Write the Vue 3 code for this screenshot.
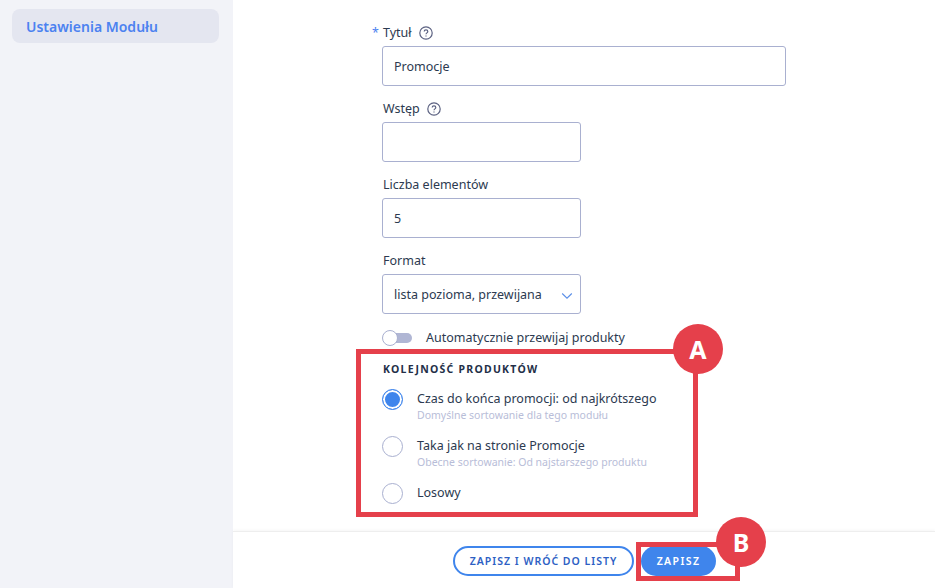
<script setup>
const options = [
  { label: 'Czas do końca promocji: od najkrótszego', hint: 'Domyślne sortowanie dla tego modułu', checked: true },
  { label: 'Taka jak na stronie Promocje', hint: 'Obecne sortowanie: Od najstarszego produktu', checked: false },
  { label: 'Losowy', hint: '', checked: false }
]
</script>

<template>
  <div class="page">
    <aside class="sidebar">
      <div class="nav-item">Ustawienia Modułu</div>
    </aside>
    <main class="main">
      <div class="form">
        <div class="field first">
          <div class="label"><span class="star">*</span>Tytuł
            <svg class="help" viewBox="0 0 14 14"><circle cx="7" cy="7" r="6.2" /><path d="M5.2 5.6c0-1 .8-1.7 1.8-1.7s1.8.7 1.8 1.6c0 1.3-1.8 1.4-1.8 2.7" /><path d="M7 9.6v.9" /></svg>
          </div>
          <div class="input wide">Promocje</div>
        </div>
        <div class="field">
          <div class="label">Wstęp
            <svg class="help" viewBox="0 0 14 14"><circle cx="7" cy="7" r="6.2" /><path d="M5.2 5.6c0-1 .8-1.7 1.8-1.7s1.8.7 1.8 1.6c0 1.3-1.8 1.4-1.8 2.7" /><path d="M7 9.6v.9" /></svg>
          </div>
          <div class="input"></div>
        </div>
        <div class="field">
          <div class="label">Liczba elementów</div>
          <div class="input">5</div>
        </div>
        <div class="field">
          <div class="label">Format</div>
          <div class="input select">lista pozioma, przewijana
            <svg class="chev" viewBox="0 0 12 8"><path d="M1.2 1.5 6 6.2l4.8-4.7" /></svg>
          </div>
        </div>
        <div class="toggle-row">
          <span class="toggle"><span class="knob"></span></span>
          <span>Automatycznie przewijaj produkty</span>
        </div>
        <div class="section-title">KOLEJNOŚĆ PRODUKTÓW</div>
        <div v-for="o in options" :key="o.label" class="radio-row">
          <span class="radio" :class="{ on: o.checked }"></span>
          <div>
            <div class="radio-label">{{ o.label }}</div>
            <div v-if="o.hint" class="radio-hint">{{ o.hint }}</div>
          </div>
        </div>
      </div>
      <footer class="footer">
        <button class="btn outline">ZAPISZ I WRÓĆ DO LISTY</button>
        <button class="btn solid">ZAPISZ</button>
      </footer>
    </main>
    <div class="box box-a"></div>
    <div class="badge badge-a">A</div>
    <div class="box box-b"></div>
    <div class="badge badge-b">B</div>
  </div>
</template>

<style scoped>
.page {
  position: relative;
  display: flex;
  width: 935px;
  height: 588px;
  overflow: hidden;
  background: #fff;
  font-family: "Noto Sans", sans-serif;
  font-size: 12.5px;
  color: #2c3a50;
}
.sidebar {
  width: 233px;
  flex: none;
  padding: 9px 14px 0 12px;
  box-sizing: border-box;
  background: #f2f3f8;
}
.nav-item {
  height: 34px;
  line-height: 36px;
  padding-left: 14px;
  border-radius: 8px;
  background: #e4e6f0;
  color: #4c82f0;
  font-weight: 600;
  font-size: 14px;
}
.main {
  flex: 1;
  display: flex;
  flex-direction: column;
  justify-content: space-between;
}
.form {
  padding-left: 149px;
}
.field {
  margin-top: 14px;
}
.field.first {
  margin-top: 24px;
}
.label {
  position: relative;
  display: flex;
  align-items: center;
  gap: 7px;
  height: 18px;
  margin-bottom: 4px;
  padding-left: 1px;
  line-height: 18px;
}
.star {
  position: absolute;
  left: -10px;
  color: #4c82f0;
}
.help {
  width: 14px;
  height: 14px;
  fill: none;
  stroke: #5c6282;
  stroke-width: 1.2;
}
.input {
  position: relative;
  box-sizing: border-box;
  width: 199px;
  height: 40px;
  line-height: 39px;
  padding-left: 11px;
  border: 1px solid #a9b0d0;
  border-radius: 3px;
  background: #fff;
}
.input.wide {
  width: 404px;
}
.chev {
  position: absolute;
  right: 7px;
  top: 17px;
  width: 12px;
  height: 8px;
  fill: none;
  stroke: #5b8fe8;
  stroke-width: 1.1;
}
.toggle-row {
  display: flex;
  align-items: center;
  gap: 14px;
  margin-top: 15px;
  height: 18px;
  line-height: 18px;
}
.toggle {
  position: relative;
  display: block;
  width: 30px;
  height: 16px;
}
.toggle::before {
  content: "";
  position: absolute;
  left: 8px;
  right: 0;
  top: 3px;
  height: 10px;
  border-radius: 5px;
  background: #b0b6d4;
}
.knob {
  position: absolute;
  left: 0;
  top: 0;
  box-sizing: border-box;
  width: 16px;
  height: 16px;
  border: 1px solid #a9b0d0;
  border-radius: 50%;
  background: #fff;
}
.section-title {
  margin-top: 14px;
  padding-left: 1px;
  font-size: 10.5px;
  line-height: 16px;
  font-weight: 700;
  letter-spacing: 1.25px;
  color: #232f48;
}
.radio-row {
  display: flex;
  gap: 14px;
  margin-top: 10px;
  min-height: 37px;
}
.section-title + .radio-row {
  margin-top: 11px;
}
.radio {
  flex: none;
  box-sizing: border-box;
  width: 21px;
  height: 21px;
  margin-top: 1px;
  border: 1px solid #a9b0d0;
  border-radius: 50%;
  background: #fff;
}
.radio.on {
  border-color: #3f85ec;
  background: #3f85ec;
  box-shadow: inset 0 0 0 2px #fff;
}
.radio-label {
  line-height: 18px;
  margin-top: 2px;
}
.radio-hint {
  margin-top: 1px;
  font-size: 10.5px;
  line-height: 13px;
  color: #b8bdd8;
}
.footer {
  display: flex;
  justify-content: center;
  gap: 7px;
  height: 57px;
  box-sizing: border-box;
  padding: 14px 0 0 1px;
  background: #fff;
  border-top: 1px solid #eee;
  box-shadow: 0 -1px 3px rgba(0, 0, 0, 0.04);
}
.btn {
  height: 30px;
  box-sizing: border-box;
  border-radius: 15px;
  font-family: "Noto Sans", sans-serif;
  font-size: 10.5px;
  font-weight: 600;
  letter-spacing: 1.4px;
}
.outline {
  width: 181px;
  border: 2px solid #3f85ec;
  background: #fff;
  color: #2e5fc4;
  letter-spacing: 1px;
}
.solid {
  width: 75px;
  border: none;
  background: #3f85ec;
  color: #fff;
}
.box {
  position: absolute;
  box-sizing: border-box;
  border: 5px solid #e5404b;
}
.box-a {
  left: 356px;
  top: 349px;
  width: 342px;
  height: 168px;
}
.box-b {
  left: 636px;
  top: 542px;
  width: 104px;
  height: 39px;
}
.badge {
  position: absolute;
  width: 50px;
  height: 50px;
  border-radius: 50%;
  background: #e5404b;
  color: #fff;
  text-align: center;
  font-size: 25px;
  line-height: 50px;
  font-weight: 700;
}
.badge-a {
  left: 673px;
  top: 324px;
}
.badge-b {
  left: 716px;
  top: 517px;
}
</style>
